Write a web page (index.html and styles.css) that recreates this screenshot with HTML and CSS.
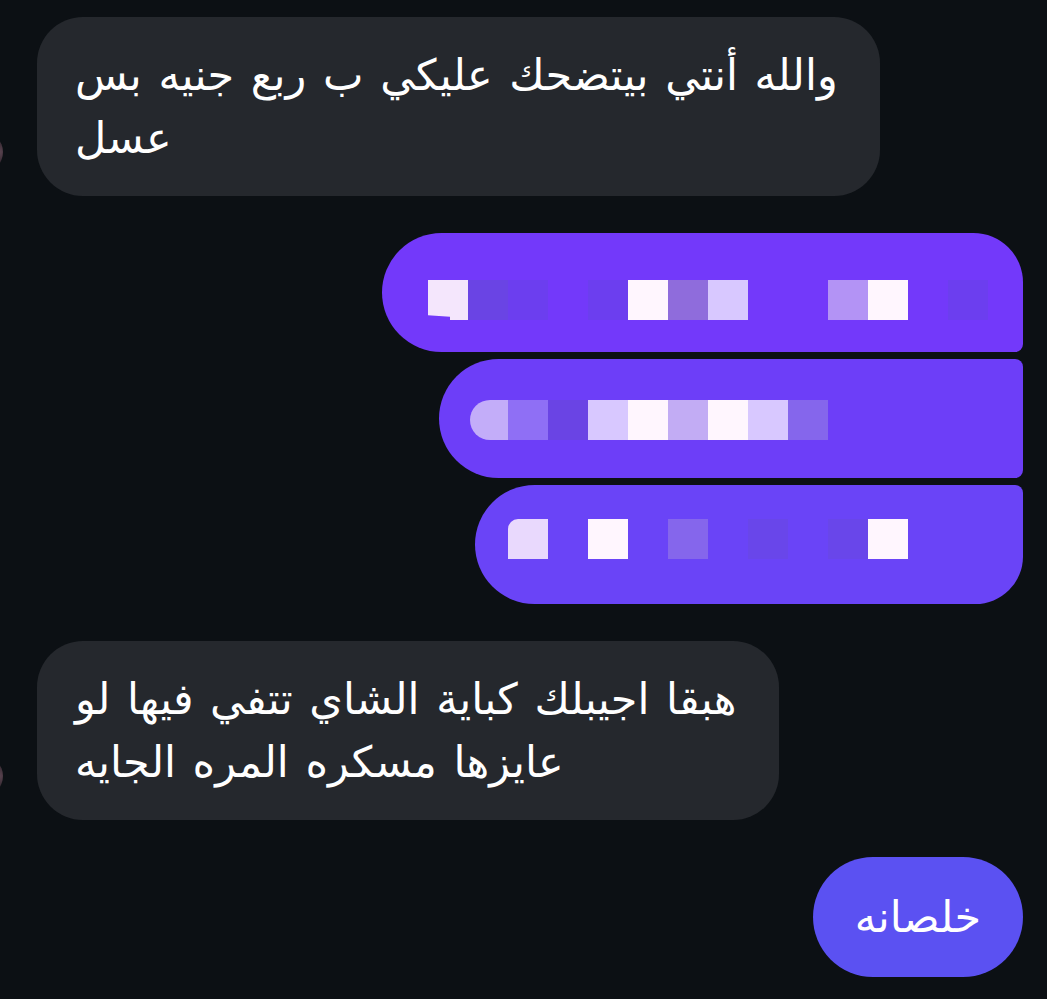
FILE: index.html
```
<!DOCTYPE html>
<html lang="ar">
<head>
    <meta charset="UTF-8">
    <meta name="viewport" content="width=device-width, initial-scale=1.0">
    <title>محادثة</title>
    <link rel="stylesheet" href="styles.css">
</head>
<body>

<div class="thread">
    <!-- رسالة واردة -->
    <div class="row row-in row-first">
        <span class="avatar"></span>
        <div class="bubble bubble-in">والله أنتي بيتضحك عليكي ب ربع جنيه بس<br>عسل</div>
    </div>

    <!-- مجموعة رسائل صادرة (مخفية) -->
    <div class="group-out">
        <div class="bubble bubble-out out-top">
            <div class="pixels">
                <span class="px c-white2 notch"></span>
                <span class="px c-deep"></span>
                <span class="px c-faint"></span>
                <span class="px"></span>
                <span class="px c-faint"></span>
                <span class="px c-white"></span>
                <span class="px c-mid2"></span>
                <span class="px c-lilac"></span>
                <span class="px"></span>
                <span class="px"></span>
                <span class="px c-soft"></span>
                <span class="px c-white"></span>
                <span class="px"></span>
                <span class="px c-faint"></span>
            </div>
        </div>
        <div class="bubble bubble-out out-mid">
            <div class="pixels">
                <span class="px c-pale round-left"></span>
                <span class="px c-mid"></span>
                <span class="px c-deep"></span>
                <span class="px c-lilac"></span>
                <span class="px c-white"></span>
                <span class="px c-soft2"></span>
                <span class="px c-white"></span>
                <span class="px c-lilac"></span>
                <span class="px c-mid3"></span>
                <span class="px"></span>
                <span class="px"></span>
                <span class="px"></span>
                <span class="px"></span>
            </div>
        </div>
        <div class="bubble bubble-out out-bottom">
            <div class="pixels">
                <span class="px c-white3 round-top"></span>
                <span class="px"></span>
                <span class="px c-white"></span>
                <span class="px"></span>
                <span class="px c-mid3"></span>
                <span class="px"></span>
                <span class="px c-faint2"></span>
                <span class="px"></span>
                <span class="px c-faint2"></span>
                <span class="px c-white"></span>
                <span class="px"></span>
                <span class="px"></span>
            </div>
        </div>
    </div>

    <!-- رسالة واردة -->
    <div class="row row-in">
        <span class="avatar"></span>
        <div class="bubble bubble-in">هبقا اجيبلك كباية الشاي تتفي فيها لو<br>عايزها مسكره المره الجايه</div>
    </div>

    <!-- رسالة صادرة -->
    <div class="row row-out">
        <div class="bubble bubble-last">خلصانه</div>
    </div>
</div>

</body>
</html>
```

FILE: styles.css
```
body {
    margin: 0;
    padding: 0;
    background-color: #0c1014;
    font-family: "DejaVu Sans", "Noto Sans", sans-serif;
    color: #ffffff;
}
.thread {
    display: flex;
    flex-direction: column;
    padding: 17px 24px 0 0;
}
.row {
    display: flex;
    align-items: flex-end;
}
.row-in {
    margin-bottom: 37px;
}
.row-out {
    justify-content: flex-end;
}
/* الصورة الشخصية تظهر طرفها فقط */
.avatar {
    width: 40px;
    height: 40px;
    margin-left: -37px;
    margin-right: 34px;
    margin-bottom: 24px;
    border-radius: 50%;
    background: radial-gradient(circle at 90% 50%, #5a4450 0, #2a2028 35%, #0c1014 70%);
    flex-shrink: 0;
}
.bubble {
    box-sizing: border-box;
}
.bubble-in {
    background-color: #25282d;
    border-radius: 46px;
    padding: 27px 42px 26px 38px;
    font-size: 43px;
    line-height: 63px;
    word-spacing: 3px;
    white-space: nowrap;
}
/* رسائل صادرة */
.group-out {
    display: flex;
    flex-direction: column;
    align-items: flex-end;
    gap: 7px;
    margin-bottom: 37px;
}
.bubble-out {
    height: 119px;
    padding-right: 35px;
}
.out-top {
    background-color: #7339fa;
    padding-left: 46px;
    padding-top: 47px;
    border-radius: 60px 50px 8px 60px;
}
.out-mid {
    background-color: #6d3ef8;
    padding-left: 29px;
    padding-top: 41px;
    border-radius: 60px 8px 8px 60px;
}
.out-bottom {
    background-color: #6a44f7;
    padding-left: 33px;
    padding-top: 34px;
    border-radius: 60px 8px 48px 60px;
}
.pixels {
    display: flex;
}
.px {
    width: 40px;
    height: 40px;
    flex-shrink: 0;
}
.c-white { background-color: #fff6fe; }
.c-white2 { background-color: #f4e6fc; }
.c-white3 { background-color: #e9d9fd; }
.c-lilac { background-color: #d8c8ff; }
.c-pale { background-color: #c3adf9; }
.c-soft { background-color: #b393f5; }
.c-soft2 { background-color: #c2acf4; }
.c-mid { background-color: #8f6ff5; }
.c-mid2 { background-color: #8f6cdc; }
.c-mid3 { background-color: #8566ec; }
.c-deep { background-color: #6a44e4; }
.c-faint { background-color: #6c3eef; }
.c-faint2 { background-color: #6946ea; }
.round-left {
    border-radius: 20px 0 0 20px;
    margin-left: 2px;
    width: 38px;
}
.round-top {
    border-top-left-radius: 10px;
}
.notch {
    clip-path: polygon(0 0, 100% 0, 100% 100%, 55% 100%, 55% 92%, 0 88%);
}
.bubble-last {
    background-color: #5b51f2;
    border-radius: 60px;
    height: 120px;
    padding: 0 42px;
    display: flex;
    align-items: center;
    font-size: 43px;
}
```
